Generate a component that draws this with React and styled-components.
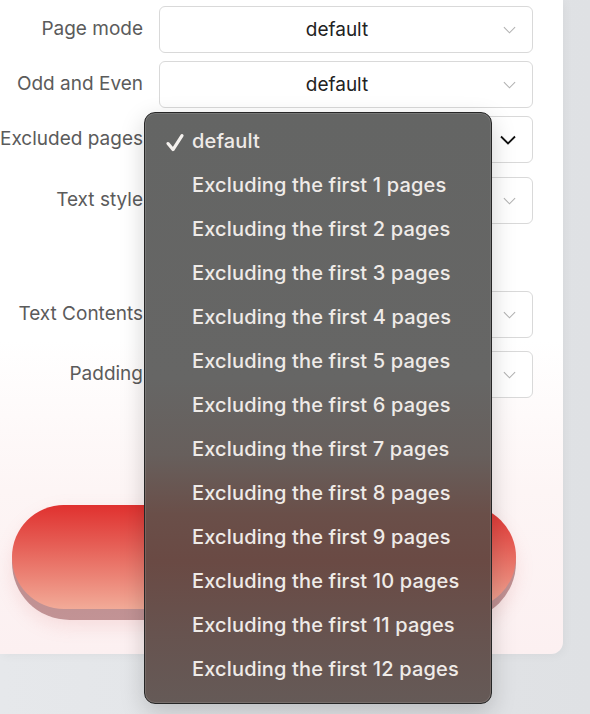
import React from "react";
import styled, { createGlobalStyle } from "styled-components";

const GlobalStyle = createGlobalStyle`
  html, body {
    margin: 0;
    padding: 0;
    background: #e4e6e9;
    font-family: "Inter", "Liberation Sans", sans-serif;
  }
`;

const Page = styled.div`
  position: relative;
  width: 590px;
  height: 714px;
  overflow: hidden;
  background: linear-gradient(90deg, #e6e8eb 0%, #dfe1e4 100%);
`;

const Card = styled.div`
  width: 563px;
  height: 654px;
  box-sizing: border-box;
  padding-top: 6px;
  background: linear-gradient(180deg, #ffffff 0%, #ffffff 52%, #fdf5f5 75%, #fcf0f1 100%);
  border-bottom-right-radius: 12px;
  box-shadow: 2px 2px 10px rgba(0, 0, 0, 0.04);
  display: flex;
  flex-direction: column;
`;

const Row = styled.div`
  display: grid;
  grid-template-columns: 143px 374px;
  column-gap: 16px;
  align-items: center;
  margin-top: ${(p) => p.$gap || 0}px;
`;

const Label = styled.div`
  text-align: right;
  white-space: nowrap;
  font-size: 19px;
  color: #5b5b5b;
  margin-top: -2px;
`;

const Select = styled.div`
  position: relative;
  height: 47px;
  box-sizing: border-box;
  border: 1px solid #d9d9d9;
  border-radius: 6px;
  background: #fff;
  display: flex;
  align-items: center;
  justify-content: center;
  padding-right: 18px;
  font-size: 19px;
  color: #222;
`;

const Chevron = styled.svg`
  position: absolute;
  right: 16px;
  top: 50%;
  transform: translateY(-50%);
  width: ${(p) => (p.$active ? 16 : 13)}px;
  height: ${(p) => (p.$active ? 10 : 8)}px;
  stroke: ${(p) => (p.$active ? "#111" : "#b3b3b3")};
  stroke-width: ${(p) => (p.$active ? 1.8 : 1.4)};
  fill: none;
`;

const ButtonArea = styled.div`
  margin-top: 107px;
  padding-left: 12px;
`;

const PillEdge = styled.div`
  width: 504px;
  height: 115px;
  border-radius: 58px;
  background: linear-gradient(180deg, #b88687 0%, #c29395 100%);
  box-shadow: 0 6px 18px rgba(220, 120, 120, 0.18);
`;

const PillFace = styled.div`
  height: 104px;
  border-radius: 52px;
  background: linear-gradient(180deg, #e0312f 0%, #e55a52 35%, #ec8577 70%, #f2ab98 100%);
`;

const Menu = styled.div`
  position: absolute;
  left: 144px;
  top: 112px;
  width: 348px;
  height: 592px;
  box-sizing: border-box;
  padding-top: 6px;
  border-radius: 11px;
  border: 1px solid #262626;
  box-shadow: inset 0 0 0 1px rgba(255, 255, 255, 0.12), 0 8px 24px rgba(0, 0, 0, 0.18);
  background: linear-gradient(
    180deg,
    #646564 0%,
    #666665 45%,
    #675f5c 58%,
    #6a4f49 68%,
    #6a4a44 76%,
    #67534f 88%,
    #655a57 100%
  );
`;

const Item = styled.div`
  position: relative;
  height: 44px;
  display: flex;
  align-items: center;
  padding-left: 47px;
  font-size: 20px;
  font-weight: 500;
  letter-spacing: 0.15px;
  color: #efebe8;
  white-space: nowrap;
`;

const Check = styled.svg`
  position: absolute;
  left: 20px;
  top: 50%;
  transform: translateY(-42%);
  width: 20px;
  height: 20px;
  fill: none;
  stroke: #f4f1ee;
  stroke-width: 3.2;
  stroke-linecap: round;
  stroke-linejoin: round;
`;

const fields = [
  { label: "Page mode", value: "default", gap: 0 },
  { label: "Odd and Even", value: "default", gap: 8 },
  { label: "Excluded pages", value: "", gap: 8, active: true },
  { label: "Text style", value: "default", gap: 14 },
  { label: "Text Contents", value: "", gap: 67 },
  { label: "Padding", value: "", gap: 13 },
];

const options = ["default"].concat(
  Array.from({ length: 12 }, (_, i) => `Excluding the first ${i + 1} pages`)
);

export default function App() {
  return (
    <>
      <GlobalStyle />
      <Page>
        <Card>
          {fields.map((f) => (
            <Row key={f.label} $gap={f.gap}>
              <Label>{f.label}</Label>
              <Select>
                {f.value}
                <Chevron viewBox="0 0 16 10" $active={f.active}>
                  <path d="M1 1.5 L8 8.5 L15 1.5" />
                </Chevron>
              </Select>
            </Row>
          ))}
          <ButtonArea>
            <PillEdge>
              <PillFace />
            </PillEdge>
          </ButtonArea>
        </Card>

        <Menu>
          {options.map((o, i) => (
            <Item key={o}>
              {i === 0 && (
                <Check viewBox="0 0 20 20">
                  <path d="M3 11 L8 17 L17 3" />
                </Check>
              )}
              {o}
            </Item>
          ))}
        </Menu>
      </Page>
    </>
  );
}
